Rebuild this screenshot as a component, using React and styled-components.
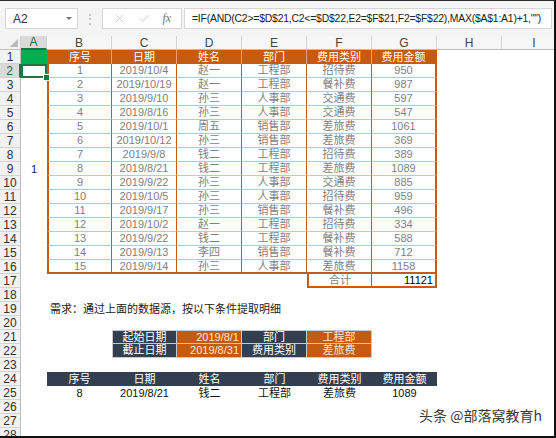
import React from "react";
import styled, { createGlobalStyle, css } from "styled-components";
import { X, Check } from "lucide-react";

const GlobalStyle = createGlobalStyle`
  html, body { margin: 0; padding: 0; background: #fff; }
  body { font-family: "Liberation Sans", "Noto Sans CJK SC", sans-serif; }
`;

const FORMULA = '=IF(AND(C2>=$D$21,C2<=$D$22,E2=$F$21,F2=$F$22),MAX($A$1:A1)+1,"")';
const COLS = ["A", "B", "C", "D", "E", "F", "G", "H", "I"];
const HEAD = ["序号", "日期", "姓名", "部门", "费用类别", "费用金额"];
const ROWS = [
  [1, "2019/10/4", "赵一", "工程部", "招待费", 950],
  [2, "2019/10/19", "赵一", "工程部", "餐补费", 987],
  [3, "2019/9/10", "孙三", "人事部", "交通费", 597],
  [4, "2019/8/16", "孙三", "人事部", "交通费", 547],
  [5, "2019/10/1", "周五", "销售部", "差旅费", 1061],
  [6, "2019/10/12", "孙三", "销售部", "差旅费", 369],
  [7, "2019/9/8", "钱二", "工程部", "招待费", 389],
  [8, "2019/8/21", "钱二", "工程部", "差旅费", 1089],
  [9, "2019/9/22", "孙三", "人事部", "交通费", 885],
  [10, "2019/10/5", "孙三", "人事部", "招待费", 959],
  [11, "2019/9/17", "孙三", "销售部", "餐补费", 496],
  [12, "2019/10/2", "赵一", "工程部", "招待费", 334],
  [13, "2019/9/22", "钱二", "工程部", "餐补费", 588],
  [14, "2019/9/13", "李四", "销售部", "餐补费", 712],
  [15, "2019/9/14", "孙三", "人事部", "差旅费", 1158],
];
const RESULT = [8, "2019/8/21", "钱二", "工程部", "差旅费", 1089];
const ROW_COUNT = 28;

function buildCells() {
  const map = {};
  const set = (col, row, props) => {
    map[col + row] = props;
  };
  set("A", 1, { variant: "green" });
  set("A", 2, { variant: "selected" });
  set("A", 9, { text: "1", variant: "plain" });
  HEAD.forEach((h, i) =>
    set(COLS[i + 1], 1, { text: h, variant: "head", left: i === 0, right: i === 5 })
  );
  ROWS.forEach((r, ri) =>
    r.forEach((v, i) =>
      set(COLS[i + 1], ri + 2, {
        text: v,
        variant: i === 5 ? "dataLast" : "data",
        left: i === 0,
        right: i === 5,
        bottom: ri === 14,
      })
    )
  );
  set("F", 17, { text: "合计", variant: "data", left: true, bottom: true });
  set("G", 17, { text: "11121", variant: "total", right: true, bottom: true, align: "right" });
  set("B", 19, { text: "需求：通过上面的数据源，按以下条件提取明细", variant: "note", align: "left" });

  const crit = [
    ["起始日期", "2019/8/1", "部门", "工程部"],
    ["截止日期", "2019/8/31", "费用类别", "差旅费"],
  ];
  crit.forEach((r, ri) => {
    set("C", 21 + ri, { text: r[0], variant: "navy", first: true, top: ri === 0 });
    set("D", 21 + ri, { text: r[1], variant: "accent", align: "right", top: ri === 0 });
    set("E", 21 + ri, { text: r[2], variant: "navy", top: ri === 0 });
    set("F", 21 + ri, { text: r[3], variant: "accent", top: ri === 0 });
  });
  HEAD.forEach((h, i) => set(COLS[i + 1], 24, { text: h, variant: "band" }));
  RESULT.forEach((v, i) => set(COLS[i + 1], 25, { text: v, variant: "result" }));
  return map;
}

const CELLS = buildCells();

const variants = {
  plain: css`
    color: #222;
  `,
  green: css`
    background: #00b050;
  `,
  selected: css`
    box-shadow: inset 0 0 0 2px #217346;
    z-index: 2;
    &::after {
      content: "";
      position: absolute;
      right: -3px;
      bottom: -3px;
      width: 5px;
      height: 5px;
      background: #217346;
      border: 1px solid #fff;
    }
  `,
  head: css`
    background: #c55a11;
    color: #fff;
    border-right: 1px solid #e8a07a;
  `,
  data: css`
    color: #7f7f7f;
    border-right: 1px solid #c55a11;
    border-bottom: 1px solid #f4b89a;
  `,
  dataLast: css`
    color: #7f7f7f;
    border-bottom: 1px solid #f4b89a;
  `,
  total: css`
    color: #000;
    padding-right: 2px;
  `,
  note: css`
    color: #1a1a1a;
    padding-left: 3px;
  `,
  navy: css`
    background: #333f4f;
    color: #fff;
    border-right: 1px solid #c9c9c9;
    border-bottom: 1px solid #c9c9c9;
  `,
  accent: css`
    background: #c55a11;
    color: #fde6d6;
    border-right: 1px solid #c9c9c9;
    border-bottom: 1px solid #c9c9c9;
  `,
  band: css`
    background: #333f4f;
    color: #fff;
  `,
  result: css`
    color: #111;
  `,
};

const Frame = styled.div`
  position: relative;
  box-sizing: border-box;
  width: 556px;
  height: 438px;
  overflow: hidden;
  display: flex;
  flex-direction: column;
  border-top: 1px solid #2a2a2a;
  border-right: 2px solid #111;
  border-bottom: 2px solid #111;
  background: #fff;
`;

const Toolbar = styled.div`
  flex: 0 0 35px;
  display: flex;
  align-items: center;
  padding: 0 2px 0 5px;
  background: #f4f4f4;
  box-sizing: border-box;
`;

const NameBox = styled.div`
  box-sizing: border-box;
  width: 73px;
  height: 21px;
  background: #fff;
  border: 1px solid #d6d6d6;
  display: flex;
  align-items: center;
  justify-content: space-between;
  padding: 0 5px 0 7px;
  font-size: 12px;
  color: #333;
`;

const Caret = styled.span`
  width: 0;
  height: 0;
  border-left: 3px solid transparent;
  border-right: 3px solid transparent;
  border-top: 3px solid #777;
`;

const Grip = styled.div`
  width: 24px;
  text-align: center;
  color: #b0b0b0;
  font-size: 12px;
`;

const FxBox = styled.div`
  box-sizing: border-box;
  width: 80px;
  height: 21px;
  background: #fff;
  border: 1px solid #d6d6d6;
  display: flex;
  align-items: center;
  justify-content: space-around;
  padding: 0 4px;
  color: #c2c2c2;
`;

const FxLabel = styled.span`
  font-family: "Liberation Serif", serif;
  font-style: italic;
  font-size: 12px;
  color: #777;
`;

const FormulaBox = styled.div`
  flex: 1;
  box-sizing: border-box;
  height: 21px;
  margin-left: 2px;
  background: #fff;
  border: 1px solid #d6d6d6;
  display: flex;
  align-items: center;
  padding-left: 7px;
  font-size: 10.4px;
  letter-spacing: -0.2px;
  color: #222;
  white-space: nowrap;
  overflow: hidden;
`;

const Sheet = styled.div`
  flex: 1;
  display: grid;
  grid-template-columns: 21px 26px repeat(8, 65px);
  grid-auto-rows: 14px;
  overflow: hidden;
  font-size: 11px;
`;

const Corner = styled.div`
  position: relative;
  background: #f3f3f3;
  border-right: 1px solid #d0d0d0;
  border-bottom: 1px solid #bdbdbd;
  &::after {
    content: "";
    position: absolute;
    right: 2px;
    bottom: 2px;
    border-left: 8px solid transparent;
    border-bottom: 8px solid #b8b8b8;
  }
`;

const ColHead = styled.div`
  box-sizing: border-box;
  display: flex;
  align-items: center;
  justify-content: center;
  font-size: 12px;
  color: ${(p) => (p.$active ? "#1e6b3e" : "#444")};
  background: ${(p) => (p.$active ? "#dadada" : "#f6f6f6")};
  border-right: 1px solid #d4d4d4;
  border-bottom: ${(p) => (p.$active ? "2px solid #217346" : "1px solid #bdbdbd")};
`;

const RowHead = styled.div`
  box-sizing: border-box;
  display: flex;
  align-items: center;
  justify-content: center;
  font-size: 12px;
  color: ${(p) => (p.$active ? "#1e6b3e" : "#333")};
  background: ${(p) => (p.$active ? "#dadada" : "#f2f2f2")};
  border-right: ${(p) => (p.$active ? "2px solid #217346" : "1px solid #bdbdbd")};
  border-bottom: 1px solid #d2d2d2;
`;

const Cell = styled.div`
  box-sizing: border-box;
  position: relative;
  min-width: 0;
  display: flex;
  align-items: center;
  justify-content: ${(p) =>
    p.$align === "left" ? "flex-start" : p.$align === "right" ? "flex-end" : "center"};
  padding: 0 2px;
  white-space: nowrap;
  line-height: 13px;
  ${(p) => variants[p.$variant]}
  ${(p) => p.$left && css`border-left: 2px solid #c55a11;`}
  ${(p) => p.$right && css`border-right: 2px solid #c55a11;`}
  ${(p) => p.$bottom && css`border-bottom: 2px solid #c55a11;`}
  ${(p) => p.$first && css`border-left: 1px solid #c9c9c9;`}
  ${(p) => p.$top && css`border-top: 1px solid #c9c9c9;`}
`;

const Watermark = styled.div`
  position: absolute;
  right: 12px;
  bottom: 11px;
  font-family: "Noto Sans CJK SC", sans-serif;
  font-size: 14px;
  color: #3a3a3a;
  text-shadow: 0 0 2px #fff, 0 0 2px #fff;
`;

export default function App() {
  const rows = [];
  for (let r = 1; r <= ROW_COUNT; r++) {
    rows.push(
      <RowHead key={"rh" + r} $active={r === 2}>
        {r}
      </RowHead>
    );
    COLS.forEach((c) => {
      const cell = CELLS[c + r];
      if (!cell) {
        rows.push(<Cell key={c + r} />);
        return;
      }
      rows.push(
        <Cell
          key={c + r}
          $variant={cell.variant}
          $align={cell.align}
          $left={cell.left}
          $right={cell.right}
          $bottom={cell.bottom}
          $first={cell.first}
          $top={cell.top}
        >
          {cell.text}
        </Cell>
      );
    });
  }

  return (
    <Frame>
      <GlobalStyle />
      <Toolbar>
        <NameBox>
          A2
          <Caret />
        </NameBox>
        <Grip>⋮</Grip>
        <FxBox>
          <X size={13} strokeWidth={1.5} />
          <Check size={13} strokeWidth={1.5} />
          <FxLabel>fx</FxLabel>
        </FxBox>
        <FormulaBox>{FORMULA}</FormulaBox>
      </Toolbar>
      <Sheet>
        <Corner />
        {COLS.map((c) => (
          <ColHead key={c} $active={c === "A"}>
            {c}
          </ColHead>
        ))}
        {rows}
      </Sheet>
      <Watermark>头条 @部落窝教育h</Watermark>
    </Frame>
  );
}
